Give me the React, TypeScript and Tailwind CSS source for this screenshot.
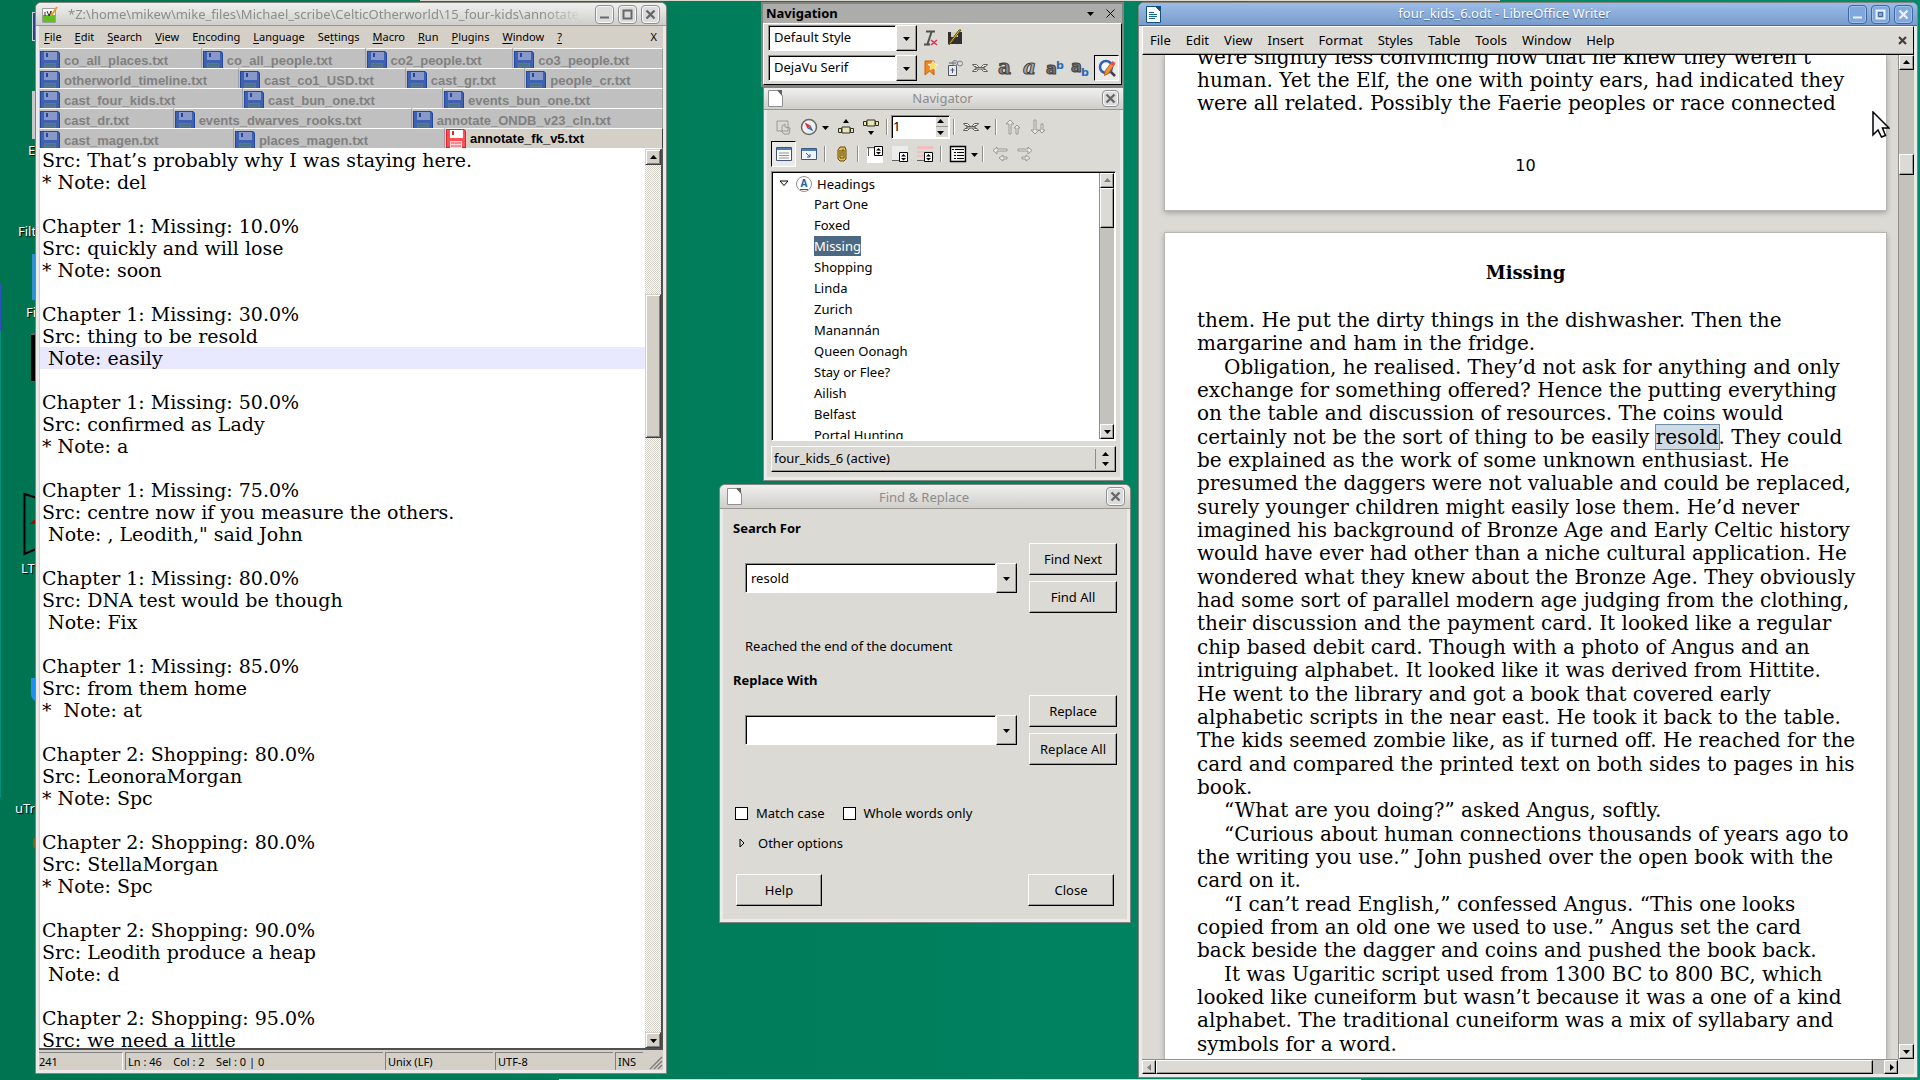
import type { ReactNode } from 'react'

const raised =
  'border border-t-white border-l-white border-r-black border-b-black bg-[#dcdad5] shadow-[inset_-1px_-1px_0_#9c9a94]'
const sunken =
  'border border-t-[#8f8d87] border-l-[#8f8d87] border-r-white border-b-white bg-white shadow-[inset_1px_1px_0_#000]'
const wineRaised =
  'border border-t-[#d4d0c8] border-l-[#d4d0c8] border-r-[#404040] border-b-[#404040] bg-[#d4d0c8] shadow-[inset_1px_1px_0_#fff,inset_-1px_-1px_0_#808080]'

const notes = `Src: That’s probably why I was staying here.
* Note: del

Chapter 1: Missing: 10.0%
Src: quickly and will lose
* Note: soon

Chapter 1: Missing: 30.0%
Src: thing to be resold
 Note: easily

Chapter 1: Missing: 50.0%
Src: confirmed as Lady
* Note: a

Chapter 1: Missing: 75.0%
Src: centre now if you measure the others.
 Note: , Leodith," said John

Chapter 1: Missing: 80.0%
Src: DNA test would be though
 Note: Fix

Chapter 1: Missing: 85.0%
Src: from them home
*  Note: at

Chapter 2: Shopping: 80.0%
Src: LeonoraMorgan
* Note: Spc

Chapter 2: Shopping: 80.0%
Src: StellaMorgan
* Note: Spc

Chapter 2: Shopping: 90.0%
Src: Leodith produce a heap
 Note: d

Chapter 2: Shopping: 95.0%
Src: we need a little`

const tabRows = [
  { cols: 'grid-cols-[162fr_163fr_147fr_149fr]', names: ['co_all_places.txt', 'co_all_people.txt', 'co2_people.txt', 'co3_people.txt'] },
  { cols: 'grid-cols-[199fr_166fr_119fr_137fr]', names: ['otherworld_timeline.txt', 'cast_co1_USD.txt', 'cast_gr.txt', 'people_cr.txt'] },
  { cols: 'grid-cols-[203fr_199fr_219fr]', names: ['cast_four_kids.txt', 'cast_bun_one.txt', 'events_bun_one.txt'] },
  { cols: 'grid-cols-[134fr_237fr_250fr]', names: ['cast_dr.txt', 'events_dwarves_rooks.txt', 'annotate_ONDB_v23_cln.txt'] },
  { cols: 'grid-cols-[194fr_210fr_217fr]', names: ['cast_magen.txt', 'places_magen.txt', 'annotate_fk_v5.txt'] },
]

const editorMenu = [
  ['', 'F', 'ile'],
  ['', 'E', 'dit'],
  ['', 'S', 'earch'],
  ['', 'V', 'iew'],
  ['E', 'n', 'coding'],
  ['', 'L', 'anguage'],
  ['Se', 't', 'tings'],
  ['', 'M', 'acro'],
  ['', 'R', 'un'],
  ['', 'P', 'lugins'],
  ['', 'W', 'indow'],
  ['', '?', ''],
]

const writerMenu = ['File', 'Edit', 'View', 'Insert', 'Format', 'Styles', 'Table', 'Tools', 'Window', 'Help']

const headings = [
  'Part One', 'Foxed', 'Missing', 'Shopping', 'Linda', 'Zurich', 'Manannán',
  'Queen Oonagh', 'Stay or Flee?', 'Ailish', 'Belfast', 'Portal Hunting',
]

const paragraphs = [
  ['them. He put the dirty things in the dishwasher. Then the', 'margarine and ham in the fridge.'],
  [
    'Obligation, he realised. They’d not ask for anything and only',
    'exchange for something offered? Hence the putting everything',
    'on the table and discussion of resources. The coins would',
    'certainly not be the sort of thing to be easily [resold]. They could',
    'be explained as the work of some unknown enthusiast. He',
    'presumed the daggers were not valuable and could be replaced,',
    'surely younger children might easily lose them. He’d never',
    'imagined his background of Bronze Age and Early Celtic history',
    'would have ever had other than a niche cultural application. He',
    'wondered what they knew about the Bronze Age. They obviously',
    'had some sort of parallel modern age judging from the clothing,',
    'their discussion and the payment card. It looked like a regular',
    'chip based debit card. Though with a photo of Angus and an',
    'intriguing alphabet. It looked like it was derived from Hittite.',
    'He went to the library and got a book that covered early',
    'alphabetic scripts in the near east. He took it back to the table.',
    'The kids seemed zombie like, as if turned off. He reached for the',
    'card and compared the printed text on both sides to pages in his',
    'book.',
  ],
  ['“What are you doing?” asked Angus, softly.'],
  [
    '“Curious about human connections thousands of years ago to',
    'the writing you use.” John pushed over the open book with the',
    'card on it.',
  ],
  [
    '“I can’t read English,” confessed Angus. “This one looks',
    'copied from an old one we used to use.” Angus set the card',
    'back beside the dagger and coins and pushed the book back.',
  ],
  [
    'It was Ugaritic script used from 1300 BC to 800 BC, which',
    'looked like cuneiform but wasn’t because it was a one of a kind',
    'alphabet. The traditional cuneiform was a mix of syllabary and',
    'symbols for a word.',
  ],
]

function Tri({ dir = 'down', className = '' }: { dir?: 'up' | 'down' | 'left' | 'right'; className?: string }) {
  const d = {
    down: 'M1 3h7L4.5 7z',
    up: 'M1 6h7L4.5 2z',
    left: 'M6 1v7L2 4.5z',
    right: 'M3 1v7l4-3.5z',
  }[dir]
  return (
    <svg width="9" height="9" viewBox="0 0 9 9" className={`shrink-0 ${className}`}>
      <path d={d} fill="currentColor" />
    </svg>
  )
}

function Floppy({ active = false }: { active?: boolean }) {
  return (
    <svg width="20" height="19" viewBox="0 0 20 19" className="shrink-0">
      <path d="M0 0h18l2 2v17H0z" fill={active ? '#e8202c' : '#2048a0'} />
      <path d="M1 1h16.500l1.500 1.500V18H1z" fill={active ? '#ff5058' : '#4060b0'} />
      <path d="M4 1h13v8H4z" fill={active ? '#fff' : '#8898c8'} />
      <path d="M6 2h2v4H6z" fill={active ? '#e8202c' : '#2048a0'} />
      <path d="M4 12h12v7H4z" fill={active ? '#ffd8d8' : '#587898'} />
      <path d="M5 14h10M5 17h10" stroke={active ? '#f04048' : '#407070'} strokeWidth="1" />
    </svg>
  )
}

function WinButton({ kind, blue = false, small = false }: { kind: 'min' | 'max' | 'close'; blue?: boolean; small?: boolean }) {
  const fg = blue ? '#e8f0fc' : '#686868'
  return (
    <button
      aria-label={kind}
      className={`flex items-center justify-center rounded-[4px] border ${small ? 'size-[17px]' : 'size-[19px]'} ${
        blue ? 'border-[#4068a0] bg-[#80a8dc] shadow-[inset_0_0_0_1px_#a0c0e8]' : 'border-[#909090] bg-[#dcdcdc] shadow-[inset_0_0_0_1px_#f8f8f8]'
      }`}
    >
      <svg width="13" height="13" viewBox="0 0 13 13" fill="none">
        {kind === 'min' && <path d="M2 9.500h9" stroke={fg} strokeWidth="2" />}
        {kind === 'max' && (
          <>
            <path d="M2.500 2.500h8v8h-8z" stroke={fg} strokeWidth="2" />
            {blue && <path d="M4.500 4.500h4v4h-4z" stroke="#4068a0" />}
          </>
        )}
        {kind === 'close' && <path d="M2.500 2.500l8 8M10.500 2.500l-8 8" stroke={fg} strokeWidth="2.400" />}
      </svg>
    </button>
  )
}

function Frame({ className, children }: { className: string; children: ReactNode }) {
  return (
    <section className={`absolute flex flex-col overflow-hidden border border-[#84847e] bg-[#dcdad5] ${className}`}>
      {children}
    </section>
  )
}

function PageIcon() {
  return (
    <svg width="15" height="17" viewBox="0 0 15 17" className="shrink-0">
      <path d="M.5.500h9L14.500 5.500v11H.5z" fill="#fff" stroke="#909090" />
      <path d="M9 0h5v6z" fill="#606060" />
    </svg>
  )
}

function Combo({ id, label, value, className }: { id: string; label?: string; value: string; className: string }) {
  return (
    <div className={`flex ${className}`}>
      <input id={id} aria-label={label} defaultValue={value} className={`min-w-0 flex-1 px-[5px] outline-none ${sunken}`} />
      <button aria-label={`${label ?? value} list`} className={`flex w-[21px] items-center justify-center ${raised}`}>
        <Tri />
      </button>
    </div>
  )
}

function Tool({ label, pressed = false, children }: { label: string; pressed?: boolean; children: ReactNode }) {
  return (
    <button
      aria-label={label}
      className={`flex h-[26px] w-[25px] shrink-0 items-center justify-center ${
        pressed ? 'border border-t-black border-l-black border-r-white border-b-white bg-[#eceae6]' : ''
      }`}
    >
      <svg width="18" height="18" viewBox="0 0 18 18" fill="none">
        {children}
      </svg>
    </button>
  )
}

function Sep() {
  return <span className="mx-[3px] h-4 w-[2px] shrink-0 border-l border-[#8f8d87] bg-white" />
}

const chain = (
  <g stroke="#606058" fill="#f0f0ea">
    <path d="M1.500 5.500h4l2 2v3l-2 2h-4l1.500-2H5v-3H3zM16.500 5.500h-4l-2 2v3l2 2h4l-1.500-2h-2v-3h2z" />
    <path d="M5 8.500h8v1.500H5z" />
  </g>
)

function NotesEditor() {
  return (
    <Frame className="top-[2px] bottom-[6px] left-[35px] w-[632px] rounded-t-[6px] font-['Noto_Sans',sans-serif]">
      <header className="flex h-[23px] shrink-0 items-center border-b border-[#989890] bg-linear-to-b from-[#f0f0ee] to-[#cfcecb] pr-[6px] pl-[6px]">
        <svg width="16" height="17" viewBox="0 0 16 17" className="shrink-0">
          <path d="M.5 2.500h13v14H.5z" fill="#f8f8f8" stroke="#a0a0a0" />
          <path d="M1 9h12v7H1z" fill="#60c020" />
          <path d="M3 6v4M5 5l2 5 2-5v4" stroke="#303030" fill="none" />
          <path d="M15 1L9 10" stroke="#e8a020" strokeWidth="2" />
        </svg>
        <h1 className="mr-3 ml-[10px] min-w-0 flex-1 overflow-hidden text-[13px] leading-5 whitespace-nowrap text-[#8c8c8c] [mask-image:linear-gradient(to_right,#000_92%,transparent)]">
          *Z:\home\mikew\mike_files\Michael_scribe\CelticOtherworld\15_four-kids\annotate_fk_v5.txt
        </h1>
        <div className="flex gap-1">
          <WinButton kind="min" />
          <WinButton kind="max" />
          <WinButton kind="close" />
        </div>
      </header>
      <div className="flex min-h-0 flex-1 flex-col border-x-[3px] border-b-[3px] border-[#eceae8] bg-[#d4d0c8]">
        <nav className="flex h-[22px] shrink-0 items-center gap-[13px] px-[5px] text-[11px] leading-4 text-black">
          {editorMenu.map(([a, key, b]) => (
            <button key={a + key + b} className="whitespace-nowrap">
              {a}
              <u className="underline-offset-2">{key}</u>
              {b}
            </button>
          ))}
          <button className="mr-[1px] ml-auto">X</button>
        </nav>
        <div className="font-['Liberation_Sans',sans-serif] text-[13px] font-bold">
          {tabRows.map((row) => (
            <div key={row.names[0]} className={`grid h-5 ${row.cols}`}>
              {row.names.map((name) => {
                const active = name === 'annotate_fk_v5.txt'
                return (
                  <button
                    key={name}
                    className={`flex items-start gap-1 overflow-hidden rounded-tl-[2px] border-t border-r border-t-white pl-[1px] whitespace-nowrap ${
                      active ? 'border-r-[#404040] bg-[#d4d0c8] text-black' : 'border-r-[#a0a0a0] bg-[#c0c0c0] pt-[2px] text-[#808080]'
                    }`}
                  >
                    <Floppy active={active} />
                    <span className="pt-[2px] leading-[15px]">{name}</span>
                  </button>
                )
              })}
            </div>
          ))}
        </div>
        <div className="flex min-h-0 flex-1 border-t border-r-2 border-b-2 border-t-white border-r-[#505050] border-b-[#505050]">
          <textarea
            aria-label="annotate_fk_v5.txt"
            defaultValue={notes}
            spellCheck={false}
            className="flex-1 resize-none overflow-hidden border-l border-[#d4d0c8] bg-white bg-[linear-gradient(#e8e8ff,#e8e8ff)] bg-size-[100%_22px] bg-position-[0_198px] bg-no-repeat pl-[2px] font-['DejaVu_Serif',serif] text-[19px] leading-[22px] whitespace-pre text-black outline-none"
          />
          <div className="flex w-4 flex-col bg-[conic-gradient(#fff_25%,#d4d0c8_0_50%,#fff_0_75%,#d4d0c8_0)] bg-size-[2px_2px]">
            <button aria-label="Scroll up" className={`flex h-4 items-center justify-center ${wineRaised}`}>
              <Tri dir="up" />
            </button>
            <div className={`mt-[129px] h-36 ${wineRaised}`} />
            <button aria-label="Scroll down" className={`mt-auto flex h-4 items-center justify-center ${wineRaised}`}>
              <Tri />
            </button>
          </div>
        </div>
        <footer className="flex h-5 shrink-0 items-end gap-[2px] text-[11px] leading-[17px] whitespace-pre text-black *:h-[18px] *:border-t *:border-[#808080]">
          <span className="w-[84px] border-r border-r-white!">241</span>
          <span className="flex-1 border-l pl-[2px]">Ln : 46    Col : 2    Sel : 0 | 0</span>
          <span className="w-[108px] border-l pl-[2px]">Unix (LF)</span>
          <span className="w-[118px] border-l pl-[2px]">UTF-8</span>
          <span className="w-7 border-l pl-[2px]">INS</span>
          <svg width="18" height="18" viewBox="0 0 18 18" className="border-t-0!">
            <path d="M5 17L17 5M9 17l8-8M13 17l4-4" stroke="#808080" strokeWidth="1.500" />
          </svg>
        </footer>
      </div>
    </Frame>
  )
}

function NavigationBar() {
  return (
    <Frame className="top-[2px] left-[761px] h-[85px] w-[363px] border-2 text-[13px] text-black">
      <header className="flex h-[19px] shrink-0 items-center bg-[#acacaa] pr-1 pl-[3px]">
        <h2 className="flex-1 font-bold">Navigation</h2>
        <button aria-label="Options" className="mr-1 flex size-4 items-center justify-center">
          <Tri />
        </button>
        <button aria-label="Close" className="flex size-4 items-center justify-center">
          <svg width="9" height="9" viewBox="0 0 9 9" stroke="#000">
            <path d="M.5.500l8 8M8.500.500l-8 8" />
          </svg>
        </button>
      </header>
      <div className="flex flex-1 flex-col gap-1 border border-t-white border-l-white border-r-black border-b-black pt-[1px] pl-1">
        <div className="flex items-center">
          <Combo id="para-style" label="Paragraph style" value="Default Style" className="h-[26px] w-[149px]" />
          <Tool label="Clear formatting">
            <path d="M5 2.500h9M10.500 3L6.500 15M3 15.500h6" stroke="#505050" strokeWidth="2" />
            <path d="M10 11l6 5M16 11l-6 5" stroke="#e03050" strokeWidth="1.600" />
          </Tool>
          <Tool label="Edit style">
            <path d="M2 3h14v12H2z" fill="#303030" />
            <path d="M5 3h7v5H5z" fill="#d0d0c8" />
            <path d="M15 1L5 14l-2 2 1-3L13 1z" fill="#f8c830" stroke="#604800" />
          </Tool>
        </div>
        <div className="flex items-center">
          <Combo id="font-name" label="Font name" value="DejaVu Serif" className="h-[26px] w-[149px]" />
          <Tool label="Bookmark">
            <path d="M4 2h9v14l-4.500-4L4 16z" fill="#f08820" stroke="#c86000" />
            <path d="M12 2l1.500 3 3.500.500-2.500 2 .5 3.500-3-2-3 2 .5-3.500-2.500-2L10.500 5z" fill="#ffe060" stroke="#fff" strokeWidth=".6" />
          </Tool>
          <Tool label="Cross-reference">
            <path d="M2.500 6.500h8v10h-8zM3 4h7M6.500 9v5M4.500 11h4" stroke="#505868" fill="#e8ecf0" />
            <circle cx="9" cy="4" r="2.500" stroke="#788090" />
            <circle cx="14" cy="4.500" r="2.500" stroke="#788090" />
          </Tool>
          <Tool label="Hyperlink">{chain}</Tool>
          <Tool label="Strong">
            <text x="2" y="15" fontSize="20" fontWeight="bold" fontFamily="DejaVu Serif" fill="#888" stroke="#404040">a</text>
          </Tool>
          <Tool label="Emphasis">
            <text x="2" y="15" fontSize="20" fontWeight="bold" fontStyle="italic" fontFamily="DejaVu Serif" fill="#aaa" stroke="#404040">a</text>
          </Tool>
          <Tool label="Superscript">
            <text x="0" y="15" fontSize="16" fontWeight="bold" fontFamily="DejaVu Sans" fill="#777" stroke="#404040">a</text>
            <text x="10" y="10" fontSize="11" fontWeight="bold" fontFamily="DejaVu Sans" fill="#2868b8">b</text>
          </Tool>
          <Tool label="Subscript">
            <text x="0" y="13" fontSize="16" fontWeight="bold" fontFamily="DejaVu Sans" fill="#777" stroke="#404040">a</text>
            <text x="10" y="17" fontSize="11" fontWeight="bold" fontFamily="DejaVu Sans" fill="#2868b8">b</text>
          </Tool>
          <span className="w-[2px]" />
          <Tool label="Find and replace" pressed>
            <path d="M11 11l6 6" stroke="#404040" strokeWidth="2.500" />
            <circle cx="8" cy="8" r="6" fill="#f4f8ff" stroke="#3060b8" strokeWidth="2.500" />
            <path d="M13.500 3.500l3 2-6 9-4 2 .5-4.500z" fill="#f09030" stroke="#b05010" strokeWidth=".8" />
            <path d="M12.500 5l2-3 3 2-2 3z" fill="#e85050" />
          </Tool>
        </div>
      </div>
    </Frame>
  )
}

function Navigator() {
  return (
    <Frame className="top-[87px] left-[763px] h-[394px] w-[361px] text-[13px] text-black">
      <header className="flex h-[22px] shrink-0 items-center border-b border-[#989890] bg-linear-to-b from-[#f0f0ee] to-[#cfcecb] px-[4px]">
        <PageIcon />
        <h2 className="flex-1 text-center text-[#8c8c8c]">Navigator</h2>
        <WinButton kind="close" small />
      </header>
      <div className="flex min-h-0 flex-1 flex-col border-x-[3px] border-b-[3px] border-[#eceae8] px-1 pt-1 pb-[5px]">
        <div className="flex h-[26px] items-center">
          <Tool label="Toggle">
            <path d="M2 3h11v10H2zM7 8v6l2 2h5l1-6-5-1V6z" stroke="#989890" fill="#dcdad5" />
          </Tool>
          <Tool label="Navigate by">
            <circle cx="9" cy="9" r="7.500" stroke="#686868" strokeWidth="1.500" fill="#f0f0f0" />
            <path d="M4.500 4.500l6 3-3 3z" fill="#e03030" />
            <path d="M13.500 13.500l-6-3 3-3z" fill="#4070c0" />
          </Tool>
          <Tri className="mr-[3px]" />
          <Tool label="Previous">
            <path d="M6 5h6L9 1z" fill="#000" />
            <path d="M5 9h8v6H5zM1.500 10.500h3v4h-3zM13.500 10.500h3v4h-3z" fill="#e8e4b8" stroke="#303020" />
          </Tool>
          <Tool label="Next">
            <path d="M6 13h6l-3 4z" fill="#000" />
            <path d="M5 2h8v6H5zM1.500 3.500h3v4h-3zM13.500 3.500h3v4h-3z" fill="#e8e4b8" stroke="#303020" />
          </Tool>
          <Sep />
          <div className={`flex h-6 w-[59px] p-[1px] ${sunken}`}>
            <input aria-label="Page number" defaultValue="1" className="w-0 flex-1 outline-none" />
            <div className="flex w-3 flex-col bg-[#dcdad5]">
              <button aria-label="Increase" className="flex h-[10px] items-center border-b border-[#9c9a94]">
                <Tri dir="up" />
              </button>
              <button aria-label="Decrease" className="flex h-[10px] items-center">
                <Tri />
              </button>
            </div>
          </div>
          <Sep />
          <Tool label="Drag mode">{chain}</Tool>
          <Tri />
          <Sep />
          <Tool label="Promote chapter">
            <path d="M5 16V6H2l4-4 4 4H7v10zM12 16v-6h-2l3-3 3 3h-2v6z" stroke="#989890" fill="#eceae6" />
          </Tool>
          <Tool label="Demote chapter">
            <path d="M5 2v10H2l4 4 4-4H7V2zM12 6v6h-2l3 3 3-3h-2V6z" stroke="#989890" fill="#eceae6" />
          </Tool>
        </div>
        <div className="mt-[1px] flex h-[26px] items-center">
          <Tool label="List box" pressed>
            <path d="M1.500 2.500h15v13h-15z" fill="#fff" stroke="#405878" />
            <path d="M2 3h14v2H2z" fill="#5080b8" />
            <path d="M4 8h10M4 10.500h10M4 13h10" stroke="#909090" />
          </Tool>
          <Tool label="Content view">
            <path d="M1.500 3.500h15v11h-15z" fill="#f0f4f8" stroke="#405878" />
            <path d="M2 4h14v2H2z" fill="#5080b8" />
            <path d="M6 8l4 4m0-3v3H7" stroke="#3060a0" />
          </Tool>
          <Sep />
          <Tool label="Set reminder">
            <path d="M5 5l2-3h5l1 3v9l-2 2H7l-2-2z" fill="#e0c050" stroke="#604810" />
            <path d="M7 5v8h4V5H9v6" stroke="#604810" />
          </Tool>
          <Sep />
          <Tool label="Header">
            <path d="M1 4h16v14H1z" fill="#fff" />
            <path d="M1 2.500h8M2.500 2v9" stroke="#606060" />
            <path d="M8.500 1.500h8v9h-8z" fill="#fff" stroke="#000" />
            <path d="M10 5.500h5L12.500 3zM10 7h5l-2.500 2.500z" fill="#000" />
          </Tool>
          <Tool label="Footer">
            <path d="M1 1h16v14H1z" fill="#ececec" />
            <path d="M1 15.500h8" stroke="#606060" />
            <path d="M8.500 7.500h8v9h-8z" fill="#fff" stroke="#000" />
            <path d="M10 11.500h5L12.500 9zM10 13h5l-2.500 2.500z" fill="#000" />
          </Tool>
          <Tool label="Anchor text">
            <path d="M1 1h16v3H1zM1 6h16v2H1zM1 10h7v2H1z" fill="#f0c0c0" />
            <path d="M1 15.500h8" stroke="#606060" />
            <path d="M8.500 7.500h8v9h-8z" fill="#fff" stroke="#000" />
            <path d="M10 11.500h5L12.500 9zM10 13h5l-2.500 2.500z" fill="#000" />
          </Tool>
          <Sep />
          <Tool label="Heading levels">
            <path d="M1.500 1.500h15v15h-15z" fill="#f4f4f4" stroke="#000" strokeWidth="1.400" />
            <path d="M3 4.500h2M6 4.500h9M5 7.500h2M8 7.500h7M5 10.500h2M8 10.500h7M5 13.500h2M8 13.500h7" stroke="#000" />
          </Tool>
          <Tri />
          <Sep />
          <Tool label="Promote level">
            <path d="M16 4H6V2L2 5.500 6 9V6h10zM16 12h-4v-2l-4 3 4 3v-2h4z" stroke="#989890" fill="#eceae6" />
          </Tool>
          <Tool label="Demote level">
            <path d="M2 4h10V2l4 3.500L12 9V6H2zM6 12h4v-2l4 3-4 3v-2H6z" stroke="#989890" fill="#eceae6" />
          </Tool>
        </div>
        <div className={`mt-1 flex min-h-0 flex-1 overflow-hidden p-[1px] ${sunken}`}>
          <ul className="min-h-0 flex-1 overflow-hidden leading-[20px] *:h-[21px]">
            <li className="flex items-center pl-[6px]">
              <svg width="10" height="7" viewBox="0 0 10 7" fill="none" stroke="#000">
                <path d="M1 1h8L5 5.500z" />
              </svg>
              <svg width="18" height="18" viewBox="0 0 18 18" className="mr-1 ml-[6px]">
                <circle cx="9" cy="9" r="7.500" fill="#fff" stroke="#909090" />
                <text x="9" y="12" fontSize="10" fontWeight="bold" fontFamily="Noto Sans" textAnchor="middle" fill="#2060a8">A</text>
                <path d="M5 14.500h8" stroke="#2060a8" />
              </svg>
              Headings
            </li>
            {headings.map((h) => (
              <li key={h} className="pl-[41px]">
                <button className={h === 'Missing' ? 'h-5 bg-[#4b6983] text-white' : 'h-5'}>{h}</button>
              </li>
            ))}
          </ul>
          <div className="flex w-[15px] shrink-0 flex-col border-l border-[#8f8d87] bg-[#c4c2bd]">
            <button aria-label="Scroll up" className={`flex h-[15px] items-center justify-center text-[#808080] ${raised}`}>
              <Tri dir="up" />
            </button>
            <div className={`h-10 ${raised}`} />
            <button aria-label="Scroll down" className={`mt-auto flex h-[15px] items-center justify-center ${raised}`}>
              <Tri />
            </button>
          </div>
        </div>
        <div className={`mt-[5px] flex h-[26px] shrink-0 items-center ${raised}`}>
          <select aria-label="Active document" className="min-w-0 flex-1 appearance-none pl-[2px] outline-none">
            <option>four_kids_6 (active)</option>
          </select>
          <span className="flex h-5 w-5 flex-col items-center justify-center border-l border-[#8f8d87]">
            <Tri dir="up" />
            <Tri />
          </span>
        </div>
      </div>
    </Frame>
  )
}

function FindReplace() {
  const btn = `h-8 w-[88px] ${raised}`
  return (
    <Frame className="top-[484px] left-[719px] h-[439px] w-[412px] rounded-t-[6px] text-[13px] leading-5 text-black">
      <header className="flex h-6 shrink-0 items-center border-b border-[#989890] bg-linear-to-b from-[#f0f0ee] to-[#cfcecb] pr-[5px] pl-[7px]">
        <PageIcon />
        <h2 className="flex-1 text-center text-[#8c8c8c]">Find &amp; Replace</h2>
        <WinButton kind="close" />
      </header>
      <div className="flex flex-1 flex-col border-x-[3px] border-b-[3px] border-[#eceae8] px-[10px] pt-[9px]">
        <label htmlFor="search-for" className="font-bold">Search For</label>
        <div className="mt-[5px] flex items-start justify-between">
          <Combo id="search-for" value="resold" className="mt-5 ml-3 h-[30px] w-[272px]" />
          <div className="flex flex-col gap-[6px]">
            <button className={btn}>Find Next</button>
            <button className={btn}>Find All</button>
          </div>
        </div>
        <p className="mt-[23px] pl-3">Reached the end of the document</p>
        <label htmlFor="replace-with" className="mt-[14px] font-bold">Replace With</label>
        <div className="mt-[5px] flex items-start justify-between">
          <Combo id="replace-with" value="" className="mt-5 ml-3 h-[30px] w-[272px]" />
          <div className="flex flex-col gap-[6px]">
            <button className={btn}>Replace</button>
            <button className={btn}>Replace All</button>
          </div>
        </div>
        <div className="mt-[38px] flex gap-[18px] pl-[2px]">
          {['Match case', 'Whole words only'].map((text) => (
            <label key={text} className="flex items-center gap-2">
              <input type="checkbox" className="size-[13px] appearance-none border border-black bg-white" />
              {text}
            </label>
          ))}
        </div>
        <button className="mt-[10px] flex items-center gap-[13px] self-start pl-[6px]">
          <svg width="6" height="10" viewBox="0 0 6 10" fill="none" stroke="#000">
            <path d="M1 1v8l4-4z" />
          </svg>
          Other options
        </button>
        <div className="mt-auto mb-[13px] flex justify-between px-[3px]">
          <button className={`h-8 w-[86px] ${raised}`}>Help</button>
          <button className={`h-8 w-[86px] ${raised}`}>Close</button>
        </div>
      </div>
    </Frame>
  )
}

function Line({ text, indent }: { text: string; indent: boolean }) {
  const [before, found, after] = text.split(/[[\]]/)
  return (
    <span className={`block h-[23px] whitespace-nowrap ${indent ? 'pl-[27px]' : ''}`}>
      {before}
      {found && <mark className="bg-[#cfdbe4] text-black outline outline-[#6f8fa8]">{found}</mark>}
      {after}
    </span>
  )
}

function Writer() {
  return (
    <Frame className="top-[2px] right-[2px] bottom-[2px] left-[1138px] rounded-t-[6px] text-[13px] text-black">
      <header className="flex h-[23px] shrink-0 items-center border-b border-[#4868a0] bg-linear-to-b from-[#9cbce8] to-[#789ccc] pr-1 pl-[7px]">
        <svg width="15" height="17" viewBox="0 0 15 17" className="shrink-0">
          <path d="M.5.500h9l5 5v11H.5z" fill="#fff" stroke="#105080" />
          <path d="M9 0h6v6z" fill="#105080" />
          <path d="M3 6.500h5M3 8.500h8M3 10.500h8M3 12.500h6" stroke="#1868a0" />
        </svg>
        <h1 className="flex-1 text-center text-white [text-shadow:0_1px_1px_#406090]">four_kids_6.odt - LibreOffice Writer</h1>
        <div className="flex gap-1">
          <WinButton kind="min" blue />
          <WinButton kind="max" blue />
          <WinButton kind="close" blue />
        </div>
      </header>
      <div className="flex min-h-0 flex-1 flex-col border-x-[3px] border-b-[3px] border-[#eceae8]">
        <nav className="flex h-[29px] shrink-0 items-center gap-[15px] border border-t-white border-l-white border-r-black border-b-black pl-[7px] shadow-[inset_0_-1px_0_#9c9a94]">
          {writerMenu.map((item) => (
            <button key={item}>{item}</button>
          ))}
          <button aria-label="Close document" className="mr-[6px] ml-auto">
            <svg width="9" height="9" viewBox="0 0 9 9" stroke="#404040" strokeWidth="2.200">
              <path d="M1 1l7 7M8 1L1 8" />
            </svg>
          </button>
        </nav>
        <div className="flex min-h-0 flex-1">
          <main className="flex min-w-0 flex-1 flex-col gap-[21px] overflow-hidden pr-[11px] pl-[22px] font-['DejaVu_Serif',serif] text-[20px] leading-[23px]">
            <article className="flex h-[156px] shrink-0 flex-col justify-end overflow-hidden border-x border-b border-[#b8b6b0] bg-white px-8 pb-8 shadow-[0_2px_5px_#00000040]">
              <p>
                <Line text="were slightly less convincing now that he knew they weren’t" indent={false} />
                <Line text="human. Yet the Elf, the one with pointy ears, had indicated they" indent={false} />
                <Line text="were all related. Possibly the Faerie peoples or race connected" indent={false} />
              </p>
              <p className="mt-[39px] text-center font-['DejaVu_Sans',sans-serif] text-base leading-6">10</p>
            </article>
            <article className="flex min-h-0 flex-1 flex-col border-x border-t border-[#b8b6b0] bg-white px-8 pt-7 pb-[3px] shadow-[0_2px_5px_#00000040]">
              <h2 className="mb-6 text-center text-[18px] leading-6 font-bold">Missing</h2>
              <div className="flex flex-1 flex-col justify-between">
                {paragraphs.map((lines, i) => (
                  <p key={lines[0]} className="contents">
                    {lines.map((text, n) => (
                      <Line key={text} text={text} indent={i > 0 && n === 0} />
                    ))}
                  </p>
                ))}
              </div>
            </article>
          </main>
          <div className="flex w-4 shrink-0 flex-col border-l border-[#8f8d87] bg-[#c4c2bd]">
            <button aria-label="Scroll up" className={`flex h-[15px] items-center justify-center ${raised}`}>
              <Tri dir="up" />
            </button>
            <div className={`mt-[84px] h-[21px] ${raised}`} />
            <button aria-label="Scroll down" className={`mt-auto flex h-[15px] items-center justify-center ${raised}`}>
              <Tri />
            </button>
          </div>
        </div>
        <div className="mr-4 flex h-[15px] shrink-0 border-t border-[#8f8d87] bg-[#c4c2bd]">
          <button aria-label="Scroll left" className={`flex w-[14px] items-center justify-center text-[#808080] ${raised}`}>
            <Tri dir="left" />
          </button>
          <div className={`mr-[11px] flex-1 ${raised}`} />
          <button aria-label="Scroll right" className={`flex w-[14px] items-center justify-center ${raised}`}>
            <Tri dir="right" />
          </button>
        </div>
      </div>
    </Frame>
  )
}

// shortcuts that peek out from behind the editor window
function DesktopIcons() {
  return (
    <div className="text-[13px] leading-4 text-white [text-shadow:1px_1px_1px_#000] *:absolute">
      <span className="top-[283px] left-0 h-[514px] w-px bg-[#009080]" />
      <span className="top-[283px] left-0 h-12 w-px bg-[#3050c0]" />
      <span className="top-3 left-8 h-[29px] w-4 border border-[#d0d0d0] bg-[#204890]" />
      <span className="top-[91px] left-8 h-12 w-4 bg-[#c8c8c8]" />
      <span className="top-[142px] left-7">E</span>
      <span className="top-[223px] left-[18px]">Filt</span>
      <span className="top-[254px] left-8 h-[46px] w-4 bg-[#3090d0]" />
      <span className="top-[304px] left-[26px]">Fi</span>
      <span className="top-[333px] left-[31px] h-12 w-4 border-t-2 border-[#606060] bg-black" />
      <svg width="14" height="64" viewBox="0 0 14 64" fill="none" className="top-[492px] left-[23px]">
        <path d="M20 8L1.500 2v60L20 54" stroke="#000" strokeWidth="2" />
        <path d="M6 32l8-6v6z" fill="#b00000" />
      </svg>
      <span className="top-[560px] left-[21px]">LT</span>
      <span className="top-[678px] left-[31px] h-6 w-4 rounded-bl-lg bg-[#2090f0]" />
      <span className="top-[800px] left-[15px]">uTr</span>
      <span className="top-[837px] left-[33px] h-3 w-2 rounded-full bg-[#806020]" />
    </div>
  )
}

export default function App() {
  return (
    <div className="relative h-screen w-full overflow-hidden bg-linear-to-r from-[#007450] to-[#008c6c] font-['Noto_Sans',sans-serif]">
      <div className="absolute top-0 right-[420px] left-[420px] h-px bg-[#d8d8d0]" />
      <div className="absolute right-[559px] bottom-0 left-[559px] h-px bg-[#d8d8d0]" />
      <DesktopIcons />
      <NotesEditor />
      <NavigationBar />
      <Navigator />
      <FindReplace />
      <Writer />
      <svg width="18" height="27" viewBox="0 0 18 27" className="absolute top-[111px] right-[30px]">
        <path d="M1 1v23l5-5 3.500 7 4-1.500L10.500 17H17z" fill="#f8f8f8" stroke="#000" strokeWidth="1.500" />
      </svg>
    </div>
  )
}
